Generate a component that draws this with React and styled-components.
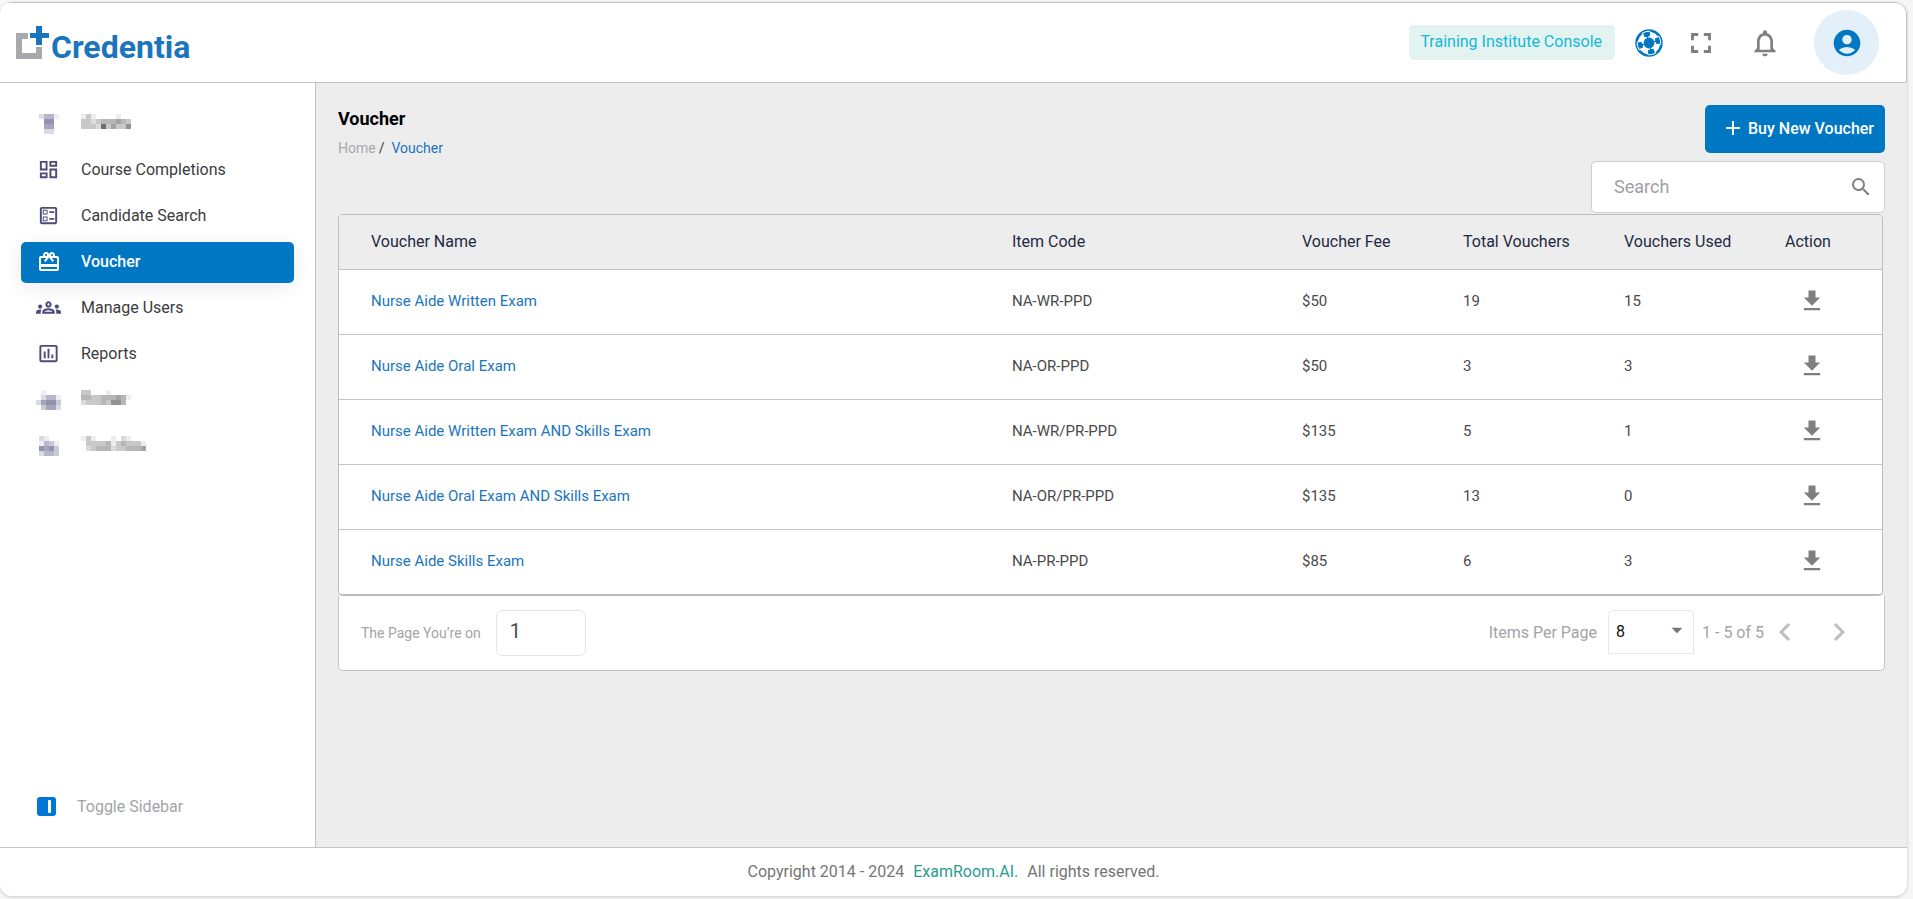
import React, { useState } from "react";
import styled, { createGlobalStyle } from "styled-components";
import {
  MdAccountCircle,
  MdAdd,
  MdArrowDropDown,
  MdChevronLeft,
  MdChevronRight,
  MdDownload,
  MdFullscreen,
  MdInsertChartOutlined,
  MdNotificationsNone,
  MdOutlineBallot,
  MdOutlineCardGiftcard,
  MdOutlineDashboard,
  MdOutlineGroups,
  MdSearch,
} from "react-icons/md";

const GlobalStyle = createGlobalStyle`
  * {
    box-sizing: border-box;
  }

  body {
    margin: 0;
    background: #f6f6f6;
    color: #3c3c3c;
    font-family: Roboto, "Liberation Sans", sans-serif;
    font-size: 16px;
  }

  button, input, select {
    font-family: inherit;
  }

  a {
    text-decoration: none;
  }
`;

const Shell = styled.div`
  display: flex;
  flex-direction: column;
  min-height: calc(100vh - 5px);
  margin: 2px 6px 3px 0;
  background: #fff;
  border-radius: 12px;
  box-shadow: 0 1px 2px 1px #dcdcdc;
  overflow: hidden;
`;

const Header = styled.header`
  display: flex;
  align-items: center;
  justify-content: space-between;
  height: 81px;
  padding: 0 27px 0 16px;
  border: 1px solid #c4c4c4;
  border-left: 0;
  border-radius: 0 12px 0 0;
`;

const Logo = styled.svg`
  display: block;
  width: 190px;
  height: 56px;

  text {
    font: 700 32px Roboto, sans-serif;
    fill: #1b75bc;
  }
`;

const HeaderActions = styled.div`
  display: flex;
  align-items: center;
`;

const ConsoleTag = styled.span`
  height: 35px;
  margin-right: 20px;
  padding: 0 13px 0 11px;
  border-radius: 5px;
  background: #e3f3f2;
  color: #17b8d4;
  line-height: 33px;
`;

const IconButton = styled.button`
  display: flex;
  align-items: center;
  justify-content: center;
  width: ${({ $width }) => $width || 32}px;
  height: 32px;
  padding: 0;
  border: 0;
  background: none;
  color: ${({ $color }) => $color || "#7f7f7f"};
  cursor: pointer;

  svg {
    flex-shrink: 0;
  }
`;

const Avatar = styled(IconButton)`
  width: 65px;
  height: 65px;
  margin-left: 23px;
  border-radius: 50%;
  background: #e3f0f9;
  color: #0077c2;
`;

const Body = styled.div`
  display: flex;
  flex: 1;
`;

const Sidebar = styled.aside`
  display: flex;
  flex-direction: column;
  justify-content: space-between;
  width: 316px;
  padding: 21px 21px 24px;
  border-right: 1px solid #c4c4c4;
`;

const Nav = styled.nav`
  display: flex;
  flex-direction: column;
  gap: 5px;
`;

const NavItem = styled.a`
  display: flex;
  align-items: center;
  gap: 20px;
  height: 41px;
  padding: 0 0 2px 15px;
  border-radius: 5px;
  color: ${({ $active }) => ($active ? "#fff" : "#3c3c3c")};
  background: ${({ $active }) => ($active ? "#0077c2" : "none")};
  box-shadow: ${({ $active }) => ($active ? "0 4px 18px rgba(60, 60, 100, 0.1)" : "none")};
  font-weight: ${({ $active }) => ($active ? 500 : 400)};
`;

const NavIcon = styled.span`
  display: flex;
  justify-content: center;
  width: 25px;
  color: ${({ $active }) => ($active ? "#fff" : "#4b4b7c")};
`;

const ToggleButton = styled.button`
  display: flex;
  align-items: center;
  gap: 21px;
  height: 34px;
  padding: 0 16px;
  border: 0;
  background: none;
  color: #a3a3a8;
  font-size: 16px;
  cursor: pointer;
`;

const Main = styled.main`
  flex: 1;
  min-width: 0;
  padding: 22px 22px 40px;
  background: #ededed;
`;

const PageTop = styled.div`
  display: flex;
  justify-content: space-between;
  align-items: flex-start;
`;

const PageTitle = styled.h1`
  margin: 2px 0 8px;
  font-size: 18px;
  font-weight: 700;
  line-height: 24px;
  color: #000;
`;

const Breadcrumb = styled.nav`
  display: flex;
  font-size: 14px;
  line-height: 18px;

  span {
    margin: 0 7px 0 3px;
  }
`;

const Crumb = styled.a`
  color: ${({ $current }) => ($current ? "#1b75bc" : "#a8a8ac")};
`;

const TopActions = styled.div`
  display: flex;
  flex-direction: column;
  align-items: flex-end;
  gap: 8px;
`;

const BuyButton = styled.button`
  display: flex;
  align-items: center;
  gap: 3px;
  height: 48px;
  padding: 0 11px 2px 16px;
  border: 0;
  border-radius: 5px;
  background: #0077c2;
  color: #fff;
  font-size: 16px;
  font-weight: 500;
  cursor: pointer;
`;

const SearchBox = styled.label`
  display: flex;
  align-items: center;
  width: 294px;
  height: 52px;
  padding: 0 11px 0 22px;
  border: 1px solid #cfcfcf;
  border-radius: 5px;
  background: #fff;
  color: #7f7f7f;

  input {
    flex: 1;
    min-width: 0;
    padding: 0 0 2px;
    border: 0;
    outline: 0;
    font-size: 18px;
    color: #3c3c3c;
  }

  input::placeholder {
    color: #a0a0a5;
  }
`;

const TableCard = styled.div`
  margin: 1px 2px 0 0;
  border: 1px solid #bdbdbd;
  border-bottom-width: 2px;
  border-radius: 5px;
  overflow: hidden;
`;

const Table = styled.table`
  width: 100%;
  border-collapse: collapse;
  table-layout: fixed;
  background: #fff;
`;

const Th = styled.th`
  width: ${({ $width }) => $width || "auto"};
  height: 54px;
  padding: 0;
  background: #ededed;
  color: #1f2a44;
  font-weight: 400;
  text-align: left;

  &:first-child {
    padding-left: 32px;
  }
`;

const Td = styled.td`
  height: 65px;
  padding: 0 0 2px;
  border-top: 1px solid #c4c4c4;
  font-size: 15px;
  color: #4a4a4a;

  &:first-child {
    padding-left: 32px;
  }

  a {
    color: #1b75bc;
  }
`;

const DownloadButton = styled(IconButton)`
  margin-left: 11px;
`;

const Pager = styled.div`
  display: flex;
  align-items: center;
  justify-content: space-between;
  height: 75px;
  padding: 0 29px 0 22px;
  border: 1px solid #c4c4c4;
  border-top: 0;
  border-radius: 0 0 5px 5px;
  background: #fff;
  color: #a3a3a8;
`;

const PageField = styled.label`
  display: flex;
  align-items: center;
  gap: 15px;
  font-size: 14px;

  input {
    width: 90px;
    height: 46px;
    padding: 0 0 4px 13px;
    border: 1px solid #e5e5e5;
    border-radius: 6px;
    font-size: 20px;
    color: #4a4a4a;
  }
`;

const PagerControls = styled.div`
  display: flex;
  align-items: center;
  padding-bottom: 2px;
`;

const PageSize = styled.label`
  display: flex;
  align-items: center;
  gap: 11px;
  margin-right: 8px;
`;

const SelectWrap = styled.span`
  position: relative;
  display: flex;

  select {
    appearance: none;
    width: 86px;
    height: 44px;
    padding: 0 0 2px 7px;
    border: 1px solid #e8e8e8;
    border-radius: 5px 5px 0 0;
    background: #fff;
    color: #111;
    font-size: 16px;
  }

  svg {
    position: absolute;
    right: 4px;
    top: 7px;
    color: #757575;
    pointer-events: none;
  }
`;

const PageArrows = styled.div`
  display: flex;
  gap: 22px;
  margin-left: 5px;
`;

const Footer = styled.footer`
  display: flex;
  align-items: center;
  justify-content: center;
  gap: 9px;
  height: 49px;
  padding-bottom: 2px;
  border-top: 1px solid #c4c4c4;
  color: #757575;

  a {
    color: #2a9d8f;
  }
`;

const navItems = [
  { label: "Course Completions", icon: <MdOutlineDashboard size={23} /> },
  { label: "Candidate Search", icon: <MdOutlineBallot size={23} /> },
  { label: "Voucher", icon: <MdOutlineCardGiftcard size={24} />, active: true },
  { label: "Manage Users", icon: <MdOutlineGroups size={25} /> },
  { label: "Reports", icon: <MdInsertChartOutlined size={23} /> },
];

// opacity levels of the masked entries, one string per row of blocks
const maskedItems = {
  events: {
    icon: ["2441", "0660", "0550", "0220"],
    text: ["1310000100", "3323444543", "3332835336", "0000000000"],
  },
  roster: {
    icon: ["01000", "02441", "25663", "03552"],
    text: ["3300010000", "4433444541", "2333436640", "0000000000"],
  },
  tasks: {
    icon: ["2100", "1431", "6563", "2443"],
    text: ["1310001021000", "0333341343331", "0234442334445", "0000000000000"],
  },
};

const vouchers = [
  { name: "Nurse Aide Written Exam", code: "NA-WR-PPD", fee: "$50", total: 19, used: 15 },
  { name: "Nurse Aide Oral Exam", code: "NA-OR-PPD", fee: "$50", total: 3, used: 3 },
  { name: "Nurse Aide Written Exam AND Skills Exam", code: "NA-WR/PR-PPD", fee: "$135", total: 5, used: 1 },
  { name: "Nurse Aide Oral Exam AND Skills Exam", code: "NA-OR/PR-PPD", fee: "$135", total: 13, used: 0 },
  { name: "Nurse Aide Skills Exam", code: "NA-PR-PPD", fee: "$85", total: 6, used: 3 },
];

function Blocks({ rows, color }) {
  return (
    <svg width={rows[0].length * 5} height={rows.length * 5} shapeRendering="crispEdges" aria-hidden="true">
      {rows.map((row, y) =>
        [...row].map((level, x) => (
          <rect key={`${x}-${y}`} x={x * 5} y={y * 5} width="5" height="5" fill={color} opacity={level / 10} />
        ))
      )}
    </svg>
  );
}

function MaskedItem({ item, label }) {
  return (
    <NavItem href="#" aria-label={label}>
      <NavIcon>
        <Blocks rows={item.icon} color="#4b4b7c" />
      </NavIcon>
      <Blocks rows={item.text} color="#4a4a4a" />
    </NavItem>
  );
}

function BrandLogo() {
  return (
    <Logo viewBox="0 0 190 56" role="img" aria-label="Credentia">
      <path d="M0 18h12v6H6v14h14v-6h6v12H0z" fill="#a7a9ac" />
      <path d="M20 11h6v7h7v5h-7v7h-6v-7h-6v-5h6z" fill="#1b75bc" />
      <text x="35" y="43">Credentia</text>
    </Logo>
  );
}

function BallIcon() {
  return (
    <svg width="28" height="28" viewBox="0 0 28 28" aria-hidden="true">
      <circle cx="14" cy="14" r="13" fill="#fff" stroke="#0077c2" strokeWidth="1.5" />
      <circle cx="14" cy="14" r="5.4" fill="#0077c2" />
      {[-14, 76, 166, 256].map((angle) => (
        <g key={angle} transform={`rotate(${angle} 14 14)`} fill="#0077c2">
          <path d="M10.5 3.2q3.5-1.2 7 0l-.6 3.8q-2.9 1.4-5.800 0z" />
          <path d="M18.500 1.800q5.200 2 7.300 7.200l-1.400.6q-2-4.200-6.500-6.400z" />
          <path d="M14 6v4" stroke="#0077c2" strokeWidth="1" />
        </g>
      ))}
    </svg>
  );
}

function ToggleIcon() {
  return (
    <svg width="19" height="19" viewBox="0 0 19 19" aria-hidden="true">
      <rect width="19" height="19" rx="3" fill="#0077d6" />
      <rect x="11" y="3" width="3" height="13" rx="1" fill="#fff" />
    </svg>
  );
}

export default function App() {
  const [query, setQuery] = useState("");
  const [page, setPage] = useState("1");
  const [pageSize, setPageSize] = useState("8");

  const rows = vouchers.filter(({ name }) => name.toLowerCase().includes(query.toLowerCase()));

  return (
    <>
      <GlobalStyle />
      <Shell>
        <Header>
          <BrandLogo />
          <HeaderActions>
            <ConsoleTag>Training Institute Console</ConsoleTag>
            <IconButton aria-label="Support" $width={28}>
              <BallIcon />
            </IconButton>
            <IconButton aria-label="Fullscreen" $width={76}>
              <MdFullscreen size={34} />
            </IconButton>
            <IconButton aria-label="Notifications" $width={52}>
              <MdNotificationsNone size={32} />
            </IconButton>
            <Avatar aria-label="Account">
              <MdAccountCircle size={32} />
            </Avatar>
          </HeaderActions>
        </Header>

        <Body>
          <Sidebar>
            <Nav>
              <MaskedItem item={maskedItems.events} label="Events" />
              {navItems.map(({ label, icon, active }) => (
                <NavItem key={label} href="#" $active={active}>
                  <NavIcon $active={active}>{icon}</NavIcon>
                  {label}
                </NavItem>
              ))}
              <MaskedItem item={maskedItems.roster} label="Roster" />
              <MaskedItem item={maskedItems.tasks} label="Tasks" />
            </Nav>
            <ToggleButton>
              <ToggleIcon />
              Toggle Sidebar
            </ToggleButton>
          </Sidebar>

          <Main>
            <PageTop>
              <div>
                <PageTitle>Voucher</PageTitle>
                <Breadcrumb>
                  <Crumb href="#">Home</Crumb>
                  <span>/</span>
                  <Crumb href="#" $current>Voucher</Crumb>
                </Breadcrumb>
              </div>
              <TopActions>
                <BuyButton>
                  <MdAdd size={24} />
                  Buy New Voucher
                </BuyButton>
                <SearchBox>
                  <input
                    aria-label="Search"
                    placeholder="Search"
                    value={query}
                    onChange={(e) => setQuery(e.target.value)}
                  />
                  <MdSearch size={24} />
                </SearchBox>
              </TopActions>
            </PageTop>

            <TableCard>
              <Table>
                <thead>
                  <tr>
                    <Th>Voucher Name</Th>
                    <Th $width="290px">Item Code</Th>
                    <Th $width="161px">Voucher Fee</Th>
                    <Th $width="161px">Total Vouchers</Th>
                    <Th $width="161px">Vouchers Used</Th>
                    <Th $width="97px">Action</Th>
                  </tr>
                </thead>
                <tbody>
                  {rows.map(({ name, code, fee, total, used }) => (
                    <tr key={code}>
                      <Td><a href="#">{name}</a></Td>
                      <Td>{code}</Td>
                      <Td>{fee}</Td>
                      <Td>{total}</Td>
                      <Td>{used}</Td>
                      <Td>
                        <DownloadButton aria-label={`Download ${name}`}>
                          <MdDownload size={28} />
                        </DownloadButton>
                      </Td>
                    </tr>
                  ))}
                </tbody>
              </Table>
            </TableCard>

            <Pager>
              <PageField>
                The Page You’re on
                <input value={page} onChange={(e) => setPage(e.target.value)} />
              </PageField>
              <PagerControls>
                <PageSize>
                  Items Per Page
                  <SelectWrap>
                    <select value={pageSize} onChange={(e) => setPageSize(e.target.value)}>
                      <option>8</option>
                      <option>16</option>
                      <option>24</option>
                    </select>
                    <MdArrowDropDown size={26} />
                  </SelectWrap>
                </PageSize>
                1 - 5 of 5
                <PageArrows>
                  <IconButton aria-label="Previous page" $color="#bdbdbd">
                    <MdChevronLeft size={36} />
                  </IconButton>
                  <IconButton aria-label="Next page" $color="#bdbdbd">
                    <MdChevronRight size={36} />
                  </IconButton>
                </PageArrows>
              </PagerControls>
            </Pager>
          </Main>
        </Body>

        <Footer>
          <span>Copyright 2014 - 2024</span>
          <a href="#">ExamRoom.AI.</a>
          <span>All rights reserved.</span>
        </Footer>
      </Shell>
    </>
  );
}
